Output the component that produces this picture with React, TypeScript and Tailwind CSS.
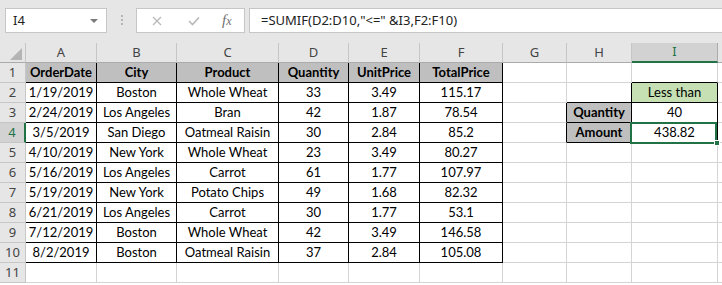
import React from "react";

const cols = ["A", "B", "C", "D", "E", "F", "G", "H", "I", ""];

const data: string[][] = [
  ["OrderDate", "City", "Product", "Quantity", "UnitPrice", "TotalPrice", "", "", ""],
  ["1/19/2019", "Boston", "Whole Wheat", "33", "3.49", "115.17", "", "", "Less than"],
  ["2/24/2019", "Los Angeles", "Bran", "42", "1.87", "78.54", "", "Quantity", "40"],
  ["3/5/2019", "San Diego", "Oatmeal Raisin", "30", "2.84", "85.2", "", "Amount", "438.82"],
  ["4/10/2019", "New York", "Whole Wheat", "23", "3.49", "80.27", "", "", ""],
  ["5/16/2019", "Los Angeles", "Carrot", "61", "1.77", "107.97", "", "", ""],
  ["5/19/2019", "New York", "Potato Chips", "49", "1.68", "82.32", "", "", ""],
  ["6/21/2019", "Los Angeles", "Carrot", "30", "1.77", "53.1", "", "", ""],
  ["7/12/2019", "Boston", "Whole Wheat", "42", "3.49", "146.58", "", "", ""],
  ["8/2/2019", "Boston", "Oatmeal Raisin", "37", "2.84", "105.08", "", "", ""],
  ["", "", "", "", "", "", "", "", ""],
];

function bordered(r: number, c: number): boolean {
  if (r >= 1 && r <= 10 && c >= 0 && c <= 5) return true;
  if (r === 2 && c === 8) return true;
  if ((r === 3 || r === 4) && (c === 7 || c === 8)) return true;
  return false;
}

function grayFill(r: number, c: number): boolean {
  if (r === 1 && c <= 5) return true;
  if ((r === 3 || r === 4) && c === 7) return true;
  return false;
}

function Cell({ r, c, text }: { r: number; c: number; text: string }) {
  const rightBlack = bordered(r, c) || bordered(r, c + 1);
  const bottomBlack = bordered(r, c) || bordered(r + 1, c);
  const gray = grayFill(r, c);
  const green = r === 2 && c === 8;
  const bold = gray;
  const selected = r === 4 && c === 8;
  return (
    <div
      className={[
        "relative h-[20px] border-r border-b flex items-end justify-center pb-[1px] text-[13px] leading-[18px] text-black whitespace-nowrap",
        rightBlack ? "border-r-black" : "border-r-[#d4d4d4]",
        bottomBlack ? "border-b-black" : "border-b-[#d4d4d4]",
        gray ? "bg-[#bfbfbf]" : green ? "bg-[#c6e0b4]" : "bg-white",
        bold ? "font-bold" : "font-normal",
        selected ? "z-10" : "",
      ].join(" ")}
    >
      {text}
      {selected && (
        <>
          <div className="absolute left-[-2px] top-[-1px] right-0 bottom-[-2px] border-2 border-[#217346] pointer-events-none" />
          <div className="absolute right-[-3px] bottom-[-4px] w-[6px] h-[6px] bg-[#217346] border border-white" />
        </>
      )}
    </div>
  );
}

export default function App() {
  return (
    <div
      className="w-[722px] h-[285px] overflow-hidden bg-white"
      style={{ fontFamily: "Lato, 'Noto Sans', sans-serif" }}
    >
      {/* Formula bar */}
      <div className="h-[43px] bg-[#e6e6e6] flex items-start pt-[8px] font-['Noto_Sans',sans-serif]">
        <div className="ml-[5px] w-[102px] h-[25px] border border-[#c6c6c6] bg-white flex items-center pl-[7px] text-[13px] text-[#222]">
          <span>I4</span>
          <svg className="ml-auto mr-[8px]" width="8" height="4" viewBox="0 0 8 4">
            <path d="M0 0 L8 0 L4 4 Z" fill="#7a7a7a" />
          </svg>
        </div>
        <div className="ml-[14px] mt-[7px] flex flex-col gap-[2px]">
          <div className="w-[2px] h-[2px] bg-[#b4b4b4]" />
          <div className="w-[2px] h-[2px] bg-[#b4b4b4]" />
          <div className="w-[2px] h-[2px] bg-[#b4b4b4]" />
        </div>
        <div className="ml-[13px] w-[109px] h-[25px] border border-[#c6c6c6] bg-white flex items-center">
          <svg className="ml-[15px]" width="10" height="10" viewBox="0 0 10 10">
            <path d="M1 1 L9 9 M9 1 L1 9" stroke="#b8b8b8" strokeWidth="1.3" />
          </svg>
          <svg className="ml-[26px]" width="12" height="10" viewBox="0 0 12 10">
            <path d="M1 5 L4.5 8.5 L11 1.5" stroke="#b8b8b8" strokeWidth="1.6" fill="none" />
          </svg>
          <span className="ml-[22px] italic text-[15px] text-[#707070] font-['Liberation_Serif',serif] leading-none">
            f<span className="text-[12px]">x</span>
          </span>
        </div>
        <div className="ml-[4px] flex-1 h-[25px] border border-r-0 border-[#c6c6c6] bg-white flex items-center pl-[11px] text-[13px] text-[#222] whitespace-nowrap">
          =SUMIF(D2:D10,"&lt;=" &amp;I3,F2:F10)
        </div>
      </div>

      {/* Grid */}
      <div className="grid grid-cols-[26px_71px_80px_102px_70px_71px_83px_64px_65px_86px_64px] font-['Lato',sans-serif]">
        <div className="relative h-[20px] bg-[#e6e6e6] border-r border-b border-r-[#c6c6c6] border-b-[#ababab]">
          <svg className="absolute left-[10px] top-[5px]" width="12" height="12" viewBox="0 0 12 12">
            <path d="M12 0 L12 12 L0 12 Z" fill="#b4b4b4" />
          </svg>
        </div>
        {cols.map((c, i) =>
          c === "I" ? (
            <div
              key={i}
              className="h-[20px] bg-[#d2d2d2] border-r border-r-[#ababab] border-b-2 border-b-[#217346] flex items-center justify-center text-[13px] text-[#217346] font-['Noto_Sans',sans-serif]"
            >
              {c}
            </div>
          ) : (
            <div
              key={i}
              className="h-[20px] bg-[#e6e6e6] border-r border-b border-r-[#c6c6c6] border-b-[#ababab] flex items-center justify-center text-[13px] text-[#444] font-['Noto_Sans',sans-serif]"
            >
              {c}
            </div>
          )
        )}
        {data.map((row, ri) => {
          const r = ri + 1;
          return (
            <React.Fragment key={r}>
              {r === 4 ? (
                <div className="h-[20px] bg-[#d2d2d2] border-r-2 border-r-[#217346] border-b border-b-[#c6c6c6] flex items-center justify-center text-[13px] text-[#217346] font-['Noto_Sans',sans-serif]">
                  {r}
                </div>
              ) : (
                <div className="h-[20px] bg-[#e6e6e6] border-r border-b border-r-[#c6c6c6] border-b-[#c6c6c6] flex items-center justify-center text-[13px] text-[#444] font-['Noto_Sans',sans-serif]">
                  {r}
                </div>
              )}
              {row.map((t, ci) => (
                <Cell key={ci} r={r} c={ci} text={t} />
              ))}
              <div className="h-[20px] border-r border-b border-r-[#d4d4d4] border-b-[#d4d4d4] bg-white" />
            </React.Fragment>
          );
        })}
      </div>
    </div>
  );
}
